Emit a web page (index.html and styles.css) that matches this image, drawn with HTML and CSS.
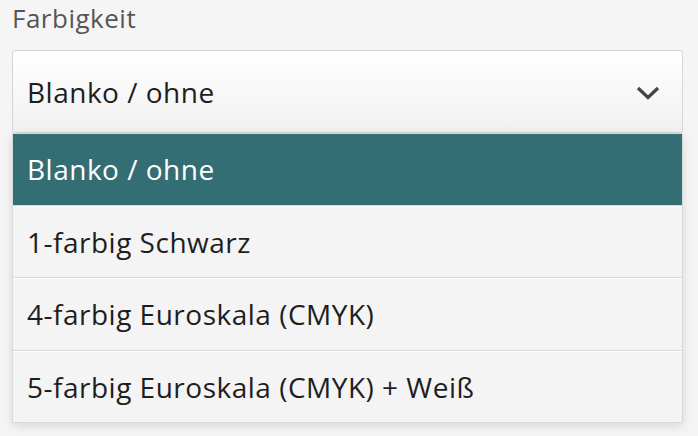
FILE: index.html
```html
<html>
  <head>
    <meta name="viewport" content="width=device-width, initial-scale=1.0">
    <link rel="stylesheet" href="styles.css">
  </head>
  <body>
    <div class="field">
      <label class="fieldLabel">Farbigkeit</label>
      <div class="selectBox">
        <span class="selectValue">Blanko / ohne</span>
        <svg class="chevron" width="24" height="16" viewBox="0 0 24 16">
          <path d="M2 3 L12 12.5 L22 3" fill="none" stroke="#454545" stroke-width="3.2"/>
        </svg>
      </div>
      <ul class="optionList">
        <li class="option selected">Blanko / ohne</li>
        <li class="option">1-farbig Schwarz</li>
        <li class="option">4-farbig Euroskala (CMYK)</li>
        <li class="option">5-farbig Euroskala (CMYK) + Weiß</li>
      </ul>
    </div>
  </body>
</html>
```

FILE: styles.css
```css
body {
  margin: 0;
  padding: 2px 15px 0 12px;
  background-color: #f5f5f5;
  font-family: "Open Sans", Lato, sans-serif;
}
.field {
  display: flex;
  flex-direction: column;
}
.fieldLabel {
  font-size: 26px;
  line-height: 33px;
  letter-spacing: 0.5px;
  color: #555;
  margin-bottom: 15px;
}
.selectBox {
  height: 81px;
  border: 1px solid #d6d6d6;
  border-radius: 3px;
  background: linear-gradient(#ffffff, #f1f1f1);
  display: flex;
  align-items: center;
  justify-content: space-between;
  padding: 0 22px 0 14px;
}
.selectValue {
  font-size: 28px;
  letter-spacing: 0.5px;
  color: #1e1e1e;
}
.chevron {
  margin-top: 2px;
}
.optionList {
  list-style: none;
  margin: 0;
  padding: 0;
  border: 1px solid #d9d9d9;
  border-top: none;
  background-color: #f4f4f4;
  box-shadow: 0 3px 10px rgba(0, 0, 0, 0.12);
}
.option {
  height: 70.5px;
  display: flex;
  align-items: center;
  padding-left: 14px;
  font-size: 28px;
  letter-spacing: 0.5px;
  color: #1e1e1e;
  border-top: 1px solid #ffffff;
  border-bottom: 1px solid #d9d9d9;
}
.option:last-child {
  border-bottom: none;
}
.selected {
  background-color: #336e75;
  color: #ffffff;
  border-top-color: #d9d9d9;
}
```
